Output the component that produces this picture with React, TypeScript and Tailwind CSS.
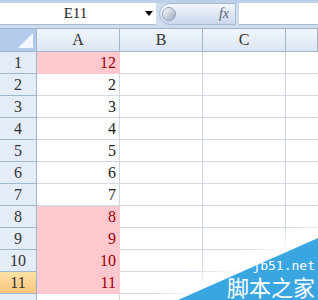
import React from "react";

const rows: { n: number; v: number; hl: boolean }[] = [
  { n: 1, v: 12, hl: true },
  { n: 2, v: 2, hl: false },
  { n: 3, v: 3, hl: false },
  { n: 4, v: 4, hl: false },
  { n: 5, v: 5, hl: false },
  { n: 6, v: 6, hl: false },
  { n: 7, v: 7, hl: false },
  { n: 8, v: 8, hl: true },
  { n: 9, v: 9, hl: true },
  { n: 10, v: 10, hl: true },
  { n: 11, v: 11, hl: true },
];

const serif = { fontFamily: "'Liberation Serif', 'Noto Sans CJK SC', serif" };

export default function App() {
  return (
    <div className="relative w-[318px] h-[300px] overflow-hidden bg-white text-[#222]" style={serif}>
      {/* Formula bar */}
      <div className="h-[28px] bg-[#cfdcee] border-t-[3px] border-[#bcd0ea] flex items-stretch pb-[3px] gap-[3px]">
        <div className="w-[156px] bg-white border-b border-[#a9bcd6] flex items-center relative">
          <span className="flex-1 text-center text-[15px] leading-none pl-[6px]">E11</span>
          <span className="w-0 h-0 mr-[3px] border-l-[4px] border-r-[4px] border-t-[5px] border-l-transparent border-r-transparent border-t-black" />
        </div>
        <div className="w-[77px] rounded-l-full bg-gradient-to-b from-[#f3f7fc] to-[#c8d7ec] border border-[#a9bcd6] flex items-center pl-[2px] pr-[6px]">
          <span className="w-[14px] h-[14px] rounded-full bg-gradient-to-br from-[#ffffff] to-[#9aa9bd] border border-[#8f9fb6]" />
          <span className="ml-auto italic text-[14px] text-[#5a6575] leading-none">fx</span>
        </div>
        <div className="flex-1 bg-white border-b border-[#a9bcd6]" />
      </div>

      {/* Column headers */}
      <div className="flex h-[24px] border-t border-[#9eb6ce] border-b border-b-[#9eb6ce]">
        <div className="w-[37px] shrink-0 bg-[#b3cbeb] border-r border-[#9eb6ce] relative">
          <div
            className="absolute right-[3px] bottom-[3px] w-0 h-0"
            style={{ borderBottom: "15px solid #f3f7fd", borderLeft: "15px solid transparent" }}
          />
        </div>
        {["A", "B", "C", ""].map((c, i) => (
          <div
            key={i}
            className={`${i < 3 ? "w-[83px] shrink-0" : "flex-1"} bg-gradient-to-b from-[#f2f6fb] to-[#dbe5f2] border-r border-[#9eb6ce] flex items-center justify-center text-[16px] text-[#333]`}
          >
            {c}
          </div>
        ))}
      </div>

      {/* Rows */}
      {rows.map(r => (
        <div key={r.n} className="flex h-[22px]">
          <div
            className={`w-[37px] shrink-0 border-r border-b border-[#9eb6ce] flex items-center justify-center text-[16px] text-[#333] ${
              r.n === 11 ? "bg-gradient-to-b from-[#fde2a8] to-[#f9c57c]" : "bg-[#e4ecf7]"
            }`}
          >
            {r.n}
          </div>
          <div
            className={`w-[83px] shrink-0 border-r border-b flex items-center justify-end pr-[3px] text-[16px] ${
              r.hl ? "bg-[#ffc7ce] border-[#ffc7ce] text-[#9c0006]" : "border-[#d0d7e5] text-[#222]"
            }`}
          >
            {r.v}
          </div>
          <div className="w-[83px] shrink-0 border-r border-b border-[#d0d7e5]" />
          <div className="w-[83px] shrink-0 border-r border-b border-[#d0d7e5]" />
          <div className="flex-1 border-b border-[#d0d7e5]" />
        </div>
      ))}
      <div className="flex h-[6px]">
        <div className="w-[37px] shrink-0 bg-[#e4ecf7] border-r border-[#9eb6ce]" />
        <div className="w-[83px] shrink-0 border-r border-[#d0d7e5]" />
        <div className="w-[83px] shrink-0 border-r border-[#d0d7e5]" />
        <div className="w-[83px] shrink-0 border-r border-[#d0d7e5]" />
      </div>

      {/* Watermark */}
      <svg className="absolute left-0 top-0" width="318" height="300" viewBox="0 0 318 300">
        <defs>
          <filter id="glow" x="-20%" y="-20%" width="140%" height="140%">
            <feGaussianBlur stdDeviation="6" />
          </filter>
        </defs>
        <polygon points="150,300 318,222 318,300" fill="#ffffff" opacity="0.85" filter="url(#glow)" />
        <polygon points="178,300 318,238 318,300" fill="#3aa6e1" />
      </svg>
      <div
        className="absolute right-[3px] top-[259px] text-white text-[13px] leading-[13px]"
        style={{ fontFamily: "'DejaVu Sans Mono', monospace" }}
      >
        jb51.net
      </div>
      <div
        className="absolute right-[3px] top-[275px] text-white text-[22px] leading-[22px]"
        style={{ fontFamily: "'Noto Sans CJK SC', sans-serif" }}
      >
        脚本之家
      </div>
    </div>
  );
}
